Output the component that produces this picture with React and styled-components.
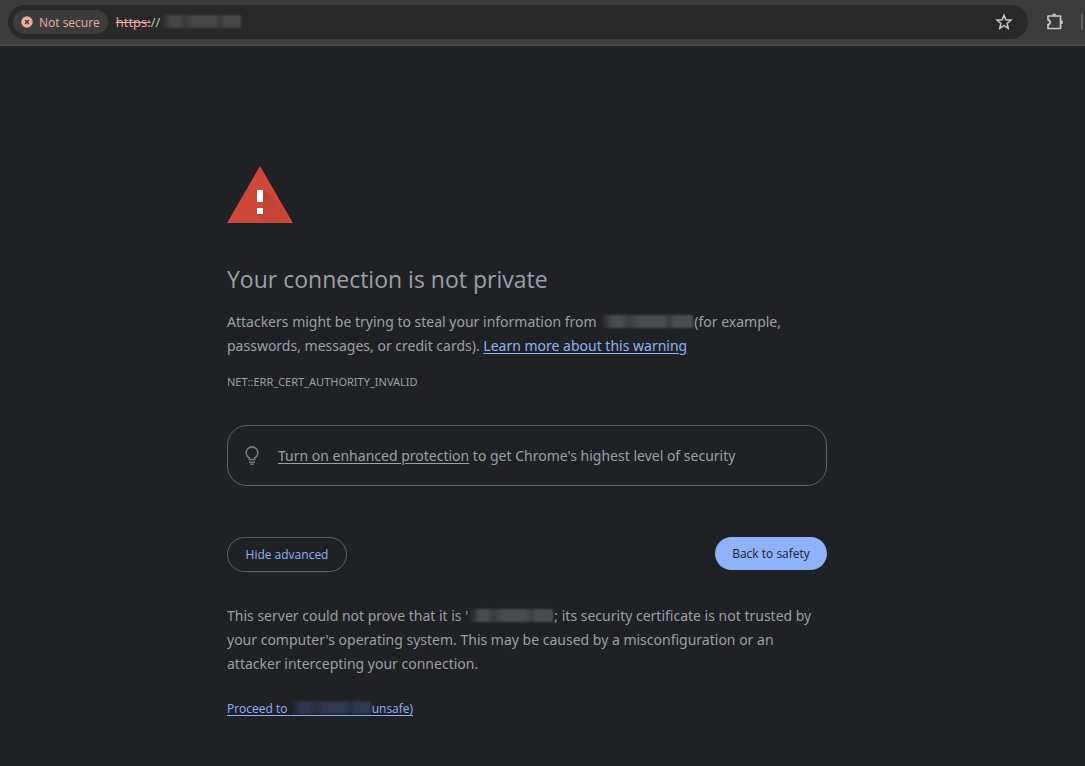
import React, { Component } from "react";
import styled, { createGlobalStyle } from "styled-components";

const GlobalStyle = createGlobalStyle`
  * {
    box-sizing: border-box;
  }
  body {
    margin: 0;
    background-color: #202124;
    color: #9aa0a6;
    font-family: "Open Sans", "Noto Sans", sans-serif;
    font-size: 14px;
    line-height: 24px;
  }
`;

const Toolbar = styled.header`
  display: flex;
  align-items: center;
  height: 46px;
  padding-left: 8px;
  background-color: #3c3c3c;
  border-bottom: 2px solid #474747;
`;
const Omnibox = styled.div`
  display: flex;
  flex: 1;
  align-items: center;
  height: 34px;
  padding: 0 14px 0 5px;
  border-radius: 17px;
  background-color: #282828;
`;
const SecurityChip = styled.button`
  display: flex;
  align-items: center;
  gap: 6px;
  height: 24px;
  padding: 0 8px;
  border: none;
  border-radius: 12px;
  background-color: #3c3c3c;
  color: #f2aca0;
  font-family: inherit;
  font-size: 12px;
  font-weight: 500;
  cursor: pointer;
`;
const Url = styled.div`
  display: flex;
  flex: 1;
  align-items: center;
  margin-left: 8px;
  color: #c7c7c7;
  font-size: 13px;
`;
const Scheme = styled.s`
  color: #f2aca0;
`;
const IconButton = styled.button`
  display: flex;
  align-items: center;
  justify-content: center;
  width: 20px;
  height: 20px;
  padding: 0;
  border: none;
  background: none;
  color: #c7c7c7;
  cursor: pointer;
`;
const Extensions = styled.div`
  display: flex;
  align-items: center;
  gap: 16px;
  padding-left: 17px;
`;
const Divider = styled.span`
  width: 4px;
  height: 16px;
  border-left: 2px solid #5c5c5c;
`;

const Page = styled.main`
  padding: 120px 31px 44px 0;
`;
const Content = styled.div`
  max-width: 600px;
  margin: 0 auto;
`;
const WarningIcon = styled.svg`
  display: block;
  margin-bottom: 40px;
`;
const H1 = styled.h1`
  margin: 0 0 15px;
  font-size: 23px;
  font-weight: 400;
  line-height: 32px;
`;
const Text = styled.p`
  margin: 0;
  padding-right: 8px;
  font-family: "Noto Sans", "Open Sans", sans-serif;
`;
const ErrorCode = styled.div`
  margin: 12px 0 31px;
  font-family: "Noto Sans", "Open Sans", sans-serif;
  font-size: 11px;
`;
const Link = styled.a`
  color: ${(props) => props.$color || "#8ab4f8"};
  font-size: ${(props) => (props.$small ? "12px" : "inherit")};
  text-underline-offset: 2px;
`;
const Redacted = styled.span`
  display: inline-block;
  width: ${(props) => props.$width}px;
  height: 15px;
  vertical-align: -3px;
  border-bottom: ${(props) => (props.$line ? "1px solid #8ab4f8" : "none")};

  &::before {
    content: "";
    display: block;
    height: 13px;
    margin: 0 1px;
    filter: blur(1px);
    background: linear-gradient(
      90deg,
      transparent,
      ${(props) => props.$color} 12%,
      ${(props) => props.$color} 22%,
      ${(props) => props.$shade} 30%,
      ${(props) => props.$color} 40%,
      ${(props) => props.$color} 68%,
      ${(props) => props.$shade} 74%,
      ${(props) => props.$color} 80%
    );
  }
`;
const Promo = styled.div`
  display: flex;
  align-items: center;
  gap: 18px;
  min-height: 61px;
  padding: 0 16px;
  border: 1px solid #5f6368;
  border-radius: 20px;
`;
const Actions = styled.div`
  display: flex;
  align-items: flex-start;
  justify-content: space-between;
  margin: 51px 0 32px;
`;
const Button = styled.button`
  width: ${(props) => (props.$primary ? "112px" : "120px")};
  height: ${(props) => (props.$primary ? "33px" : "35px")};
  padding: 0;
  border: ${(props) => (props.$primary ? "none" : "1px solid #5f6368")};
  border-radius: 20px;
  background-color: ${(props) => (props.$primary ? "#8fb3fb" : "transparent")};
  color: ${(props) => (props.$primary ? "#202124" : "#8ab4f8")};
  font-family: inherit;
  font-size: 12px;
  cursor: pointer;
`;
const Proceed = styled.p`
  margin: 20px 0 0;
`;

const Host = ({ width, color = "#494b4e", shade = "#3a3c3f", line }) => (
  <Redacted $width={width} $color={color} $shade={shade} $line={line} />
);

export default class App extends Component {
  state = {
    advanced: true
  };

  toggle = () => {
    this.setState({
      advanced: !this.state.advanced
    });
  };

  render() {
    return (
      <>
        <GlobalStyle />
        <Toolbar>
          <Omnibox>
            <SecurityChip>
              <svg width="12" height="12" viewBox="0 0 12 12">
                <circle cx="6" cy="6" r="5.7" fill="#f2aca0" />
                <path d="M4 4l4 4M8 4l-4 4" stroke="#3c3c3c" strokeWidth="1.4" />
              </svg>
              Not secure
            </SecurityChip>
            <Url>
              <Scheme>https:</Scheme>//
              <Host width={82} color="#464646" shade="#383838" />
            </Url>
            <IconButton aria-label="Bookmark this page">
              <svg width="18" height="18" viewBox="0 0 18 18">
                <path
                  d="M9 2.2l1.9 4.6 5 .4-3.8 3.2 1.2 4.9L9 12.7l-4.3 2.6 1.2-4.9L2.1 7.2l5-.4z"
                  fill="none"
                  stroke="currentColor"
                  strokeWidth="1.5"
                />
              </svg>
            </IconButton>
          </Omnibox>
          <Extensions>
            <IconButton aria-label="Extensions">
              <svg width="20" height="20" viewBox="0 0 20 20">
                <path
                  d="M3 4h12.5v12.5H3v-3.8c2.8-.4 2.8-4.5 0-4.9z"
                  fill="none"
                  stroke="currentColor"
                  strokeWidth="1.7"
                  strokeLinejoin="round"
                />
                <path
                  d="M7.2 3.6a2 2 0 0 1 4 0zM16 8.2a2 2 0 0 1 0 4z"
                  fill="currentColor"
                />
              </svg>
            </IconButton>
            <Divider />
          </Extensions>
        </Toolbar>
        <Page>
          <Content>
            <WarningIcon width="66" height="57" viewBox="0 0 66 57">
              <defs>
                <linearGradient id="shadow" x1="0" y1="0" x2="1" y2="1">
                  <stop offset="0" stopColor="#000" stopOpacity="0.12" />
                  <stop offset="1" stopColor="#000" stopOpacity="0" />
                </linearGradient>
              </defs>
              <path d="M33 0l33 57H0z" fill="#ce4739" />
              <path d="M36 24l19 14 11 19H39l-9-9 6-5z" fill="url(#shadow)" />
              <path d="M30 24h6v12h-6zM30 42h6v6h-6z" fill="#fff" />
            </WarningIcon>
            <H1>Your connection is not private</H1>
            <Text>
              Attackers might be trying to steal your information from{" "}
              <Host width={94} />
              (for example, passwords, messages, or credit cards).{" "}
              <Link href="#learn">Learn more about this warning</Link>
            </Text>
            <ErrorCode>NET::ERR_CERT_AUTHORITY_INVALID</ErrorCode>
            <Promo>
              <svg width="16" height="22" viewBox="0 0 16 22">
                <path
                  d="M5.2 14.5v-1.7a5.8 5.8 0 1 1 5.6 0v1.7zM5 17.2h6M6.2 19.3h3.6"
                  fill="none"
                  stroke="#74787d"
                  strokeWidth="1.6"
                />
              </svg>
              <Text>
                <Link href="#enhanced" $color="#9aa0a6">
                  Turn on enhanced protection
                </Link>{" "}
                to get Chrome's highest level of security
              </Text>
            </Promo>
            <Actions>
              <Button onClick={this.toggle}>
                {this.state.advanced ? "Hide advanced" : "Advanced"}
              </Button>
              <Button $primary>Back to safety</Button>
            </Actions>
            {this.state.advanced && (
              <>
                <Text>
                  This server could not prove that it is '
                  <Host width={86} />; its security certificate is not trusted
                  by your computer's operating system. This may be caused by a
                  misconfiguration or an attacker intercepting your connection.
                </Text>
                <Proceed>
                  <Link href="#proceed" $small>
                    Proceed to{" "}
                    <Host width={81} color="#303850" shade="#292d3a" line />
                    unsafe)
                  </Link>
                </Proceed>
              </>
            )}
          </Content>
        </Page>
      </>
    );
  }
}
